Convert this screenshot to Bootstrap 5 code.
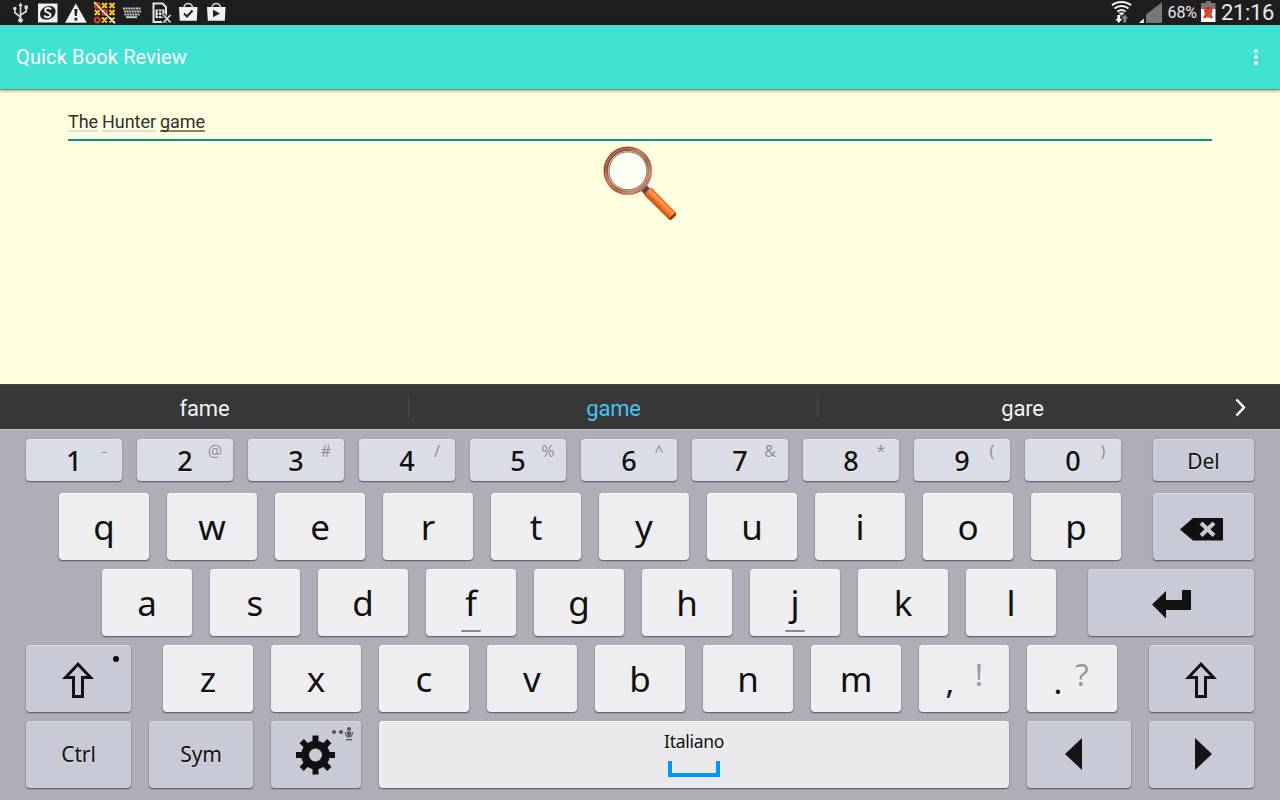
<!DOCTYPE html>
<html lang="it">
<head>
<meta charset="utf-8">
<meta name="viewport" content="width=device-width, initial-scale=1">
<title>Quick Book Review</title>
<link href="https://cdn.jsdelivr.net/npm/bootstrap@5.3.0/dist/css/bootstrap.min.css" rel="stylesheet">
<style>
body{width:1280px;height:800px;overflow:hidden;background:#ffffe0;font-family:Roboto,sans-serif}
svg{display:block;flex:none}
.status{height:25px;background:#1e1e1e;color:#e8e8e8;padding:0 6px 0 10px}
.pct{font-size:16px;line-height:25px;margin-left:2px;letter-spacing:-.1px}
.clock{font-size:22px;line-height:23px;letter-spacing:-.35px;margin-left:5px}
.appbar{height:65px;background:#40e2d2;border-bottom:1px solid #6d8f84;padding:0 16px;color:#fff;box-shadow:0 1px 3px rgba(60,50,30,.45)}
.title{font-size:20px;line-height:64px;letter-spacing:.14px}
.content{height:294px;padding:14px 68px 0}
.field{height:37px;border-bottom:2px solid #009688;font-size:18px;line-height:36px;color:#30302a;gap:4px;letter-spacing:-.05px}
.word{height:28px;border-bottom:2px solid #e0e0d4}
.word.active{border-color:#85856f}
.suggest{height:45px;background:#383838;border-top:1px solid #444;color:#f4f4f4;font-size:22px;line-height:48px;letter-spacing:-.2px}
.sug{width:409px}
.pick{color:#46c3f5}
.sug + .sug::before{content:"";position:absolute;left:-1px;top:11px;width:1px;height:22px;background:#4a4a4a}
.next{margin:13px 0 0 7px}
.keyboard{height:371px;background:#aeaeb9;border-top:1px solid #c6c6cb;padding:9px 26px 0;font-family:"Noto Sans",sans-serif;color:#111}
.line{height:67px;margin-bottom:9px;gap:18px}
.line.digits{height:42px;margin-bottom:12px;gap:15px}
.row-q{padding-left:33px}
.row-a{padding-left:76px}
.key{width:90px;background:#eeeef0;border-radius:4px;font-size:35px;line-height:1;box-shadow:inset 0 1px 0 rgba(255,255,255,.75),0 1px 2px rgba(50,50,65,.55),0 1px 0 rgba(90,90,100,.45);text-shadow:0 1px 0 rgba(255,255,255,.5)}
.digits .key{width:96px;padding-top:1px;background:#dadce6;font-size:27px;font-weight:500;box-shadow:inset 0 1px 0 rgba(255,255,255,.35),0 1px 2px rgba(50,50,65,.55),0 1px 0 rgba(90,90,100,.45)}
.line .key.fn{background:#c8cad8;font-size:21px;font-weight:400;letter-spacing:-.1px;box-shadow:inset 0 1px 0 rgba(255,255,255,.3),0 1px 2px rgba(50,50,65,.55),0 1px 0 rgba(90,90,100,.45)}
.line .w101{width:101px}.line .w104{width:104px}.line .w105{width:105px}.line .w166{width:166px}
.line .del{font-size:20.5px;padding-top:2px}
.side{margin-left:14px}
.digits .side{margin-left:17px}
.sup{position:absolute;left:63px;width:30px;top:4px;text-align:center;font-size:16px;font-weight:400;line-height:16px;color:#8d8d92}
.home::after{content:"";position:absolute;left:35px;top:61px;width:20px;height:2px;border-radius:1px;background:#858792}
.alt{position:absolute;left:45px;width:20px;top:12px;text-align:center;font-size:31px;line-height:34px;color:#98989a}
.alt.bang{left:50px}
.low{position:relative;left:-14px;top:3px;font-size:33px}
.dot{position:absolute;left:87px;top:11px;width:6px;height:6px;border-radius:50%;background:#0c0c0c}
.more{position:absolute;left:59px;top:4px}
.line .space{width:630px;background:#eaeaec;font-size:17.5px;letter-spacing:-.3px}
.lang{line-height:20px;margin-top:10px}
.spacebar{width:52px;height:16px;border:4px solid #0096ff;border-top:0;margin-top:10px}
</style>
</head>
<body>
<div class="status d-flex align-items-center justify-content-between">
  <svg width="220" height="25" viewBox="10 0 220 25">
    <g stroke="#ddd" fill="none" stroke-width="1.600"><path d="M20.500 5V21M14.800 9V12.500L20.500 17M26.200 8V11.500L20.500 15"/></g>
    <g fill="#ddd"><path d="M20.500 2.500l2.200 3.500h-4.400z"/><circle cx="20.500" cy="20.300" r="2.400"/><circle cx="14.800" cy="8.500" r="1.700"/><path d="M24.500 5.500h3.400v3.400h-3.400z"/></g>
    <rect x="38" y="3.500" width="19.500" height="19" fill="#f0f0f0"/><ellipse cx="47.800" cy="12.800" rx="8.200" ry="6.500" fill="#222" transform="rotate(-28 47.800 12.800)"/>
    <path d="M51.200 9.300C49.500 7 44.800 7.700 45.200 10.600C45.600 13.200 50.500 12 50.500 15C50.300 18 45.500 18 44.200 15.500" fill="none" stroke="#f0f0f0" stroke-width="2"/>
    <path d="M75.800 3.500L86.800 22.800H65z" fill="#f2f2f2"/><path d="M74.300 9h3.200l-.6 7h-2zM74.500 17.700h2.800v2.700h-2.800z" fill="#222"/>
    <rect x="93.500" y="1.500" width="22" height="22.500" fill="#15102c"/>
    <g fill="none" stroke-width="2.400" stroke="#f0c814"><path d="M102 3l5 5m0-5l-5 5M109.500 3l5 5m0-5l-5 5M94.800 10l5 5m0-5l-5 5M109.500 10l5 5m0-5l-5 5M102 17.500l5 5m0-5l-5 5M109.500 17.500l5 5m0-5l-5 5"/><g stroke="#dd4218" stroke-width="2"><circle cx="97.300" cy="5.500" r="2.500"/><circle cx="104.700" cy="12.500" r="2.500"/><circle cx="97.300" cy="20" r="2.500"/></g><path d="M94 2l21 21.500" stroke="#f4f4f4" stroke-width="1.500"/></g>
    <g stroke="#c8c8c8" stroke-width="2" fill="none"><path d="M123 8.500h18M124 11.500h17M124.500 14.500h15" stroke-dasharray="2 .6"/><path d="M126 17.200h11"/></g>
    <path d="M153.500 3.500h9l3.500 3.500v15h-12.500z" fill="none" stroke="#e4e4e4" stroke-width="2"/><path d="M155.500 9.500h9v8.500h-9z" fill="#e4e4e4"/><path d="M157 12h6M157 15.500h6M158.500 10v7.500M161.700 10v7.500" stroke="#333" stroke-width="1"/><path d="M163 14.500l8 8.500m0-8.500l-8 8.500" stroke="#1e1e1e" stroke-width="4"/><path d="M163.500 15l7 7.500m0-7.500l-7 7.500" stroke="#ddd" stroke-width="1.800"/>
    <g fill="#f2f2f2"><path d="M179 7h18.500l-.7 13.700h-17zM207 7h18.500l-.7 13.700h-17z"/></g>
    <g fill="none" stroke="#d8d8d8" stroke-width="1.600"><path d="M184 8c0-6 8.500-6 8.500 0M212 8c0-6 8.500-6 8.500 0"/></g>
    <path d="M184 13.500l3 3 5.500-6" fill="none" stroke="#222" stroke-width="2"/><path d="M213 9.800v7.500l7-3.700z" fill="#222"/>
  </svg>
  <div class="d-flex align-items-center">
    <svg width="56" height="25" viewBox="1110 0 56 25">
      <g fill="none" stroke="#f4f4f4" stroke-width="2"><path d="M1112 5.200C1117 .8 1126 .8 1131 5.200M1114.500 8.600C1118.500 5 1124.500 5 1128.500 8.600M1117.500 11.700C1120 9.500 1123 9.500 1125.500 11.700"/></g>
      <path d="M1118.800 13.300q2.700-2.300 5.400 0l-2.700 2.500z" fill="#f4f4f4"/><path d="M1117.400 15h2.800v4h2l-3.400 4-3.400-4h2z" fill="#fff"/><path d="M1123.400 22.500h2.800v-4h2l-3.400-4-3.400 4h2z" fill="#8a8a8a"/>
      <path d="M1146 23V14.500L1162 2.300V23z" fill="#787878"/><path d="M1139 23l4.800-4.500V23z" fill="#fff"/>
    </svg>
    <span class="pct">68%</span>
    <svg class="ms-1" width="15" height="25" viewBox="1201 0 15 25"><path d="M1206 1h5v2h4.500v6H1201V3h5z" fill="#777"/><path d="M1201 9h14.500v13H1201z" fill="#fff"/><path d="M1203.500 7.500h9v4l-2 6h-5z" fill="#333" opacity=".7"/><path d="M1204 7l8 11m0-11l-8 11" stroke="#f04018" stroke-width="2.700"/></svg>
    <span class="clock">21:16</span>
  </div>
</div>
<header class="appbar d-flex justify-content-between align-items-center position-relative">
  <span class="title">Quick Book Review</span>
  <svg width="16" height="24" viewBox="0 0 16 24" fill="#fff"><circle cx="8" cy="6" r="2.100"/><circle cx="8" cy="12" r="2.100"/><circle cx="8" cy="18" r="2.100"/></svg>
</header>
<main class="content">
  <div class="field d-flex"><span class="word">The</span><span class="word">Hunter</span><span class="word active">game</span></div>
  <svg class="mx-auto" width="80" height="80" viewBox="600 141 80 80">
    <defs>
      <linearGradient id="rim" x2="1" y2="1"><stop offset="0" stop-color="#b8674a"/><stop offset=".22" stop-color="#964a32"/><stop offset=".4" stop-color="#c27b5c"/><stop offset=".6" stop-color="#a85538"/><stop offset=".8" stop-color="#cf8866"/><stop offset="1" stop-color="#8c3f2a"/></linearGradient>
      <linearGradient id="grip" x2="0" y2="1"><stop offset="0" stop-color="#e0661c"/><stop offset=".3" stop-color="#ff9a55"/><stop offset=".6" stop-color="#ee7426"/><stop offset="1" stop-color="#c64e0c"/></linearGradient>
      <radialGradient id="glass"><stop offset="0" stop-color="#fffffa"/><stop offset="1" stop-color="#fffff0"/></radialGradient>
    </defs>
    <path d="M641 191l6-5.500 4 4-5.500 5.500z" fill="#68405f"/>
    <g transform="translate(646 189.500) rotate(45)"><path d="M2-4.300q0-.9 1-.9l34 .2q2 0 2 2v6q0 2-2 2L3 5.200Q2 5.200 2 4.300z" fill="url(#grip)"/><path d="M37-4.500q2.500 0 2.500 2.500v4q0 2.500-2.500 2.500z" fill="#8c3510"/></g>
    <circle cx="627.800" cy="170.800" r="22" fill="url(#glass)" stroke="url(#rim)" stroke-width="4.600"/>
    <circle cx="627.800" cy="170.800" r="22.200" fill="none" stroke="#dc9a7d" stroke-width="1" opacity=".5"/>
    <circle cx="628" cy="170.800" r="19" fill="none" stroke="#52606a" stroke-width=".9"/>
  </svg>
</main>
<div class="suggest d-flex text-center position-relative">
  <div class="sug">fame</div><div class="sug pick position-relative">game</div><div class="sug position-relative">gare</div>
  <svg class="next" width="14" height="20" viewBox="0 0 14 20"><path d="M2.500 1.500l7.500 8-7.500 8" fill="none" stroke="#fff" stroke-width="2.500"/></svg>
</div>
<div class="keyboard">
  <div class="line digits d-flex">
    <div class="key d-flex align-items-center justify-content-center position-relative">1<span class="sup">-</span></div>
    <div class="key d-flex align-items-center justify-content-center position-relative">2<span class="sup">@</span></div>
    <div class="key d-flex align-items-center justify-content-center position-relative">3<span class="sup">#</span></div>
    <div class="key d-flex align-items-center justify-content-center position-relative">4<span class="sup">/</span></div>
    <div class="key d-flex align-items-center justify-content-center position-relative">5<span class="sup">%</span></div>
    <div class="key d-flex align-items-center justify-content-center position-relative">6<span class="sup">^</span></div>
    <div class="key d-flex align-items-center justify-content-center position-relative">7<span class="sup">&amp;</span></div>
    <div class="key d-flex align-items-center justify-content-center position-relative">8<span class="sup">*</span></div>
    <div class="key d-flex align-items-center justify-content-center position-relative">9<span class="sup">(</span></div>
    <div class="key d-flex align-items-center justify-content-center position-relative">0<span class="sup">)</span></div>
    <div class="key fn del w101 side d-flex align-items-center justify-content-center">Del</div>
  </div>
  <div class="line row-q d-flex">
    <div class="key d-flex align-items-center justify-content-center">q</div>
    <div class="key d-flex align-items-center justify-content-center">w</div>
    <div class="key d-flex align-items-center justify-content-center">e</div>
    <div class="key d-flex align-items-center justify-content-center">r</div>
    <div class="key d-flex align-items-center justify-content-center">t</div>
    <div class="key d-flex align-items-center justify-content-center">y</div>
    <div class="key d-flex align-items-center justify-content-center">u</div>
    <div class="key d-flex align-items-center justify-content-center">i</div>
    <div class="key d-flex align-items-center justify-content-center">o</div>
    <div class="key d-flex align-items-center justify-content-center">p</div>
    <div class="key fn w101 side d-flex"><svg width="101" height="67" viewBox="1153 493 101 67"><path d="M1180 529.500L1193 518h30v22.500h-30z" fill="#111"/><path d="M1201 523l13 12.500m0-12.500l-13 12.500" stroke="#c8cad8" stroke-width="4"/></svg></div>
  </div>
  <div class="line row-a d-flex">
    <div class="key d-flex align-items-center justify-content-center">a</div>
    <div class="key d-flex align-items-center justify-content-center">s</div>
    <div class="key d-flex align-items-center justify-content-center">d</div>
    <div class="key home position-relative d-flex align-items-center justify-content-center">f</div>
    <div class="key d-flex align-items-center justify-content-center">g</div>
    <div class="key d-flex align-items-center justify-content-center">h</div>
    <div class="key home position-relative d-flex align-items-center justify-content-center">j</div>
    <div class="key d-flex align-items-center justify-content-center">k</div>
    <div class="key d-flex align-items-center justify-content-center">l</div>
    <div class="key fn w166 side d-flex"><svg width="166" height="67" viewBox="1088 569 166 67"><path d="M1152 604.500L1166 591v9h16v-10h9v20h-25v8.500z" fill="#111"/></svg></div>
  </div>
  <div class="line d-flex">
    <div class="key fn w105 d-flex position-relative"><svg width="105" height="67" viewBox="26 645 105 67"><path d="M78 664.300L65.500 677.500h8v19h9v-19h8z" fill="none" stroke="#111" stroke-width="3"/></svg><span class="dot"></span></div>
    <div class="key side d-flex align-items-center justify-content-center">z</div>
    <div class="key d-flex align-items-center justify-content-center">x</div>
    <div class="key d-flex align-items-center justify-content-center">c</div>
    <div class="key d-flex align-items-center justify-content-center">v</div>
    <div class="key d-flex align-items-center justify-content-center">b</div>
    <div class="key d-flex align-items-center justify-content-center">n</div>
    <div class="key d-flex align-items-center justify-content-center">m</div>
    <div class="key d-flex align-items-center justify-content-center position-relative"><span class="low">,</span><span class="alt bang">!</span></div>
    <div class="key d-flex align-items-center justify-content-center position-relative"><span class="low">.</span><span class="alt">?</span></div>
    <div class="key fn w105 side d-flex"><svg width="105" height="67" viewBox="26 645 105 67"><path d="M78 664.300L65.500 677.500h8v19h9v-19h8z" fill="none" stroke="#111" stroke-width="3"/></svg></div>
  </div>
  <div class="line d-flex">
    <div class="key fn w105 d-flex align-items-center justify-content-center">Ctrl</div>
    <div class="key fn w104 d-flex align-items-center justify-content-center">Sym</div>
    <div class="key fn d-flex position-relative">
      <svg width="90" height="67" viewBox="271 721 90 67"><g transform="translate(315.500 755)"><circle r="10.400" fill="none" stroke="#111" stroke-width="7.800"/><g fill="#111"><path d="M-3-19.500h6v7.500h-6zM-3 12h6v7.500h-6zM-19.500-3h7.500v6h-7.500zM12-3h7.500v6H12z"/><path transform="rotate(45)" d="M-3-19.500h6v7.500h-6zM-3 12h6v7.500h-6zM-19.500-3h7.500v6h-7.500zM12-3h7.500v6H12z"/></g></g></svg>
      <svg class="more" width="26" height="16" viewBox="330 725 26 16"><g fill="#555"><circle cx="334" cy="732" r="2.100"/><circle cx="341" cy="732" r="2.100"/><rect x="347" y="727" width="4" height="9" rx="2"/><path d="M346 739h6v1.300h-6z"/></g><path d="M345.500 732c0 6.500 7 6.500 7 0" fill="none" stroke="#555" stroke-width="1.200"/><path d="M346 731h6" stroke="#c8cad8"/></svg>
    </div>
    <div class="key space d-flex flex-column align-items-center"><span class="lang">Italiano</span><span class="spacebar"></span></div>
    <div class="key fn w104 d-flex"><svg width="104" height="67" viewBox="1027 721 104 67"><path d="M1065 754l17-16v32z" fill="#151515"/></svg></div>
    <div class="key fn w105 d-flex"><svg width="105" height="67" viewBox="1149 721 105 67"><path d="M1212 754l-17-16v32z" fill="#151515"/></svg></div>
  </div>
</div>
<script src="https://cdn.jsdelivr.net/npm/bootstrap@5.3.0/dist/js/bootstrap.bundle.min.js"></script>
</body>
</html>
